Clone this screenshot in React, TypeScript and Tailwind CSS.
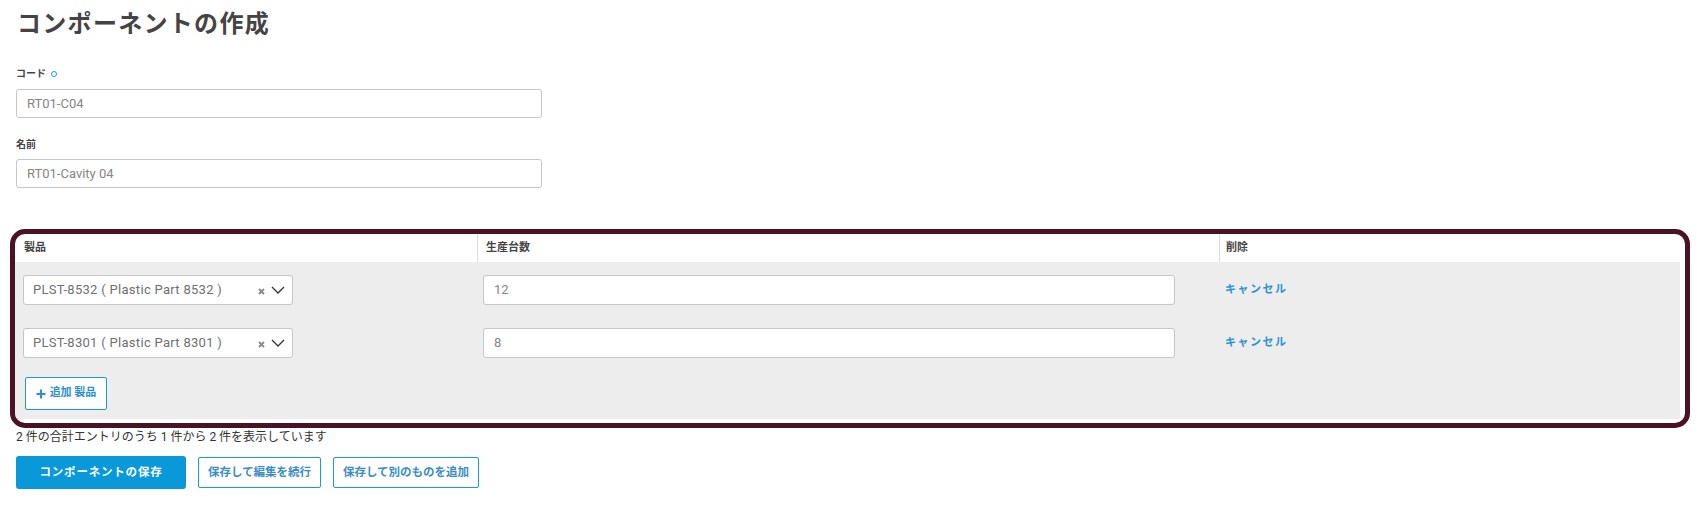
import React from "react";

const rows = [
  { product: "PLST-8532 ( Plastic Part 8532 )", qty: "12" },
  { product: "PLST-8301 ( Plastic Part 8301 )", qty: "8" },
];

function Chevron() {
  return (
    <svg width="14" height="8" viewBox="0 0 14 8" fill="none">
      <path d="M1 1l6 6 6-6" stroke="#333" strokeWidth="1.3" />
    </svg>
  );
}

function ClearX() {
  return (
    <svg width="7" height="7" viewBox="0 0 7 7" fill="none">
      <path d="M1 1l5 5M6 1l-5 5" stroke="#8a8a8a" strokeWidth="1.8" />
    </svg>
  );
}

export default function App() {
  return (
    <div className="flex flex-col bg-white text-[#333] font-['Roboto','Noto_Sans_CJK_JP',sans-serif] w-[1696px] h-[511px] overflow-hidden">
      <div className="ml-[17px] mt-[8px] h-[32px] leading-[32px] text-[24px] font-bold text-[#444] tracking-[1.3px]">
        コンポーネントの作成
      </div>

      <div className="ml-[16px] w-[526px] flex flex-col">
        <div className="mt-[26px] h-[16px] leading-[16px] text-[10px] font-bold text-[#444] flex items-center gap-[5px]">
          <span>コード</span>
          <span className="w-[6px] h-[6px] rounded-full border-[1.5px] border-[#1a9ad6]" />
        </div>
        <div className="mt-[7px] h-[29px] border border-[#c5c5ca] rounded-[3px] flex items-center pl-[10px] text-[13px] text-[#858585]">
          RT01-C04
        </div>
        <div className="mt-[19px] h-[16px] leading-[16px] text-[10px] font-bold text-[#444]">名前</div>
        <div className="mt-[6px] h-[29px] border border-[#c5c5ca] rounded-[3px] flex items-center pl-[10px] text-[13px] text-[#858585]">
          RT01-Cavity 04
        </div>
      </div>

      <div className="ml-[10px] mr-[6px] mt-[41px] h-[199px] border-[5px] border-[#4b1124] rounded-[15px] overflow-hidden bg-white flex flex-col">
        <div className="h-[28px] grid grid-cols-[462px_742px_1fr] text-[11px] font-bold text-[#444]">
          <div className="pl-[9px] flex items-center">製品</div>
          <div className="pl-[8px] flex items-center border-l border-[#dcdcdc]">生産台数</div>
          <div className="pl-[6px] flex items-center border-l border-[#dcdcdc]">削除</div>
        </div>
        <div className="mr-[5px] h-[157px] bg-[#ededed] flex flex-col">
          {rows.map((r) => (
            <div key={r.product} className="h-[53px] pt-[13px] grid grid-cols-[462px_742px_1fr]">
              <div className="pl-[8px]">
                <div className="w-[270px] h-[30px] bg-white border border-[#c5c5ca] rounded-[3px] flex items-center pl-[9px] pr-[7px] text-[13px] text-[#707070]">
                  <span className="flex-1 tracking-[0.3px]">{r.product}</span>
                  <span className="mr-[6px] mt-[3px] flex"><ClearX /></span>
                  <Chevron />
                </div>
              </div>
              <div className="pl-[6px]">
                <div className="w-[692px] h-[30px] bg-white border border-[#c5c5ca] rounded-[3px] flex items-center pl-[10px] text-[13px] text-[#858585]">
                  {r.qty}
                </div>
              </div>
              <div className="pl-[6px] h-[30px] flex items-center">
                <span className="text-[11px] font-bold text-[#2b93d2] tracking-[1.5px]">キャンセル</span>
              </div>
            </div>
          ))}
          <div className="pt-[9px] pl-[10px]">
            <button className="w-[82px] h-[33px] bg-white border border-[#1a9ad6] rounded-[2px] flex items-center justify-center gap-[4px] text-[11px] font-bold text-[#2b8fcc]">
              <svg width="10" height="10" viewBox="0 0 10 10">
                <path d="M5 0.5v9M0.5 5h9" stroke="#2b8fcc" strokeWidth="2.2" />
              </svg>
              <span>追加 製品</span>
            </button>
          </div>
        </div>
      </div>

      <div className="ml-[16px] mt-[1px] h-[16px] leading-[16px] text-[12px] text-[#333]">
        2 件の合計エントリのうち 1 件から 2 件を表示しています
      </div>

      <div className="ml-[16px] mt-[11px] flex items-center gap-[12px]">
        <button className="w-[170px] h-[33px] bg-[#0998d8] rounded-[3px] text-white text-[11.5px] font-bold tracking-[0.8px]">
          コンポーネントの保存
        </button>
        <button className="w-[123px] h-[31px] bg-white border border-[#1a9ad6] rounded-[2px] text-[#3b8dc6] text-[11.5px] font-bold">
          保存して編集を続行
        </button>
        <button className="w-[146px] h-[31px] bg-white border border-[#1a9ad6] rounded-[2px] text-[#3b8dc6] text-[11.5px] font-bold">
          保存して別のものを追加
        </button>
      </div>
    </div>
  );
}
